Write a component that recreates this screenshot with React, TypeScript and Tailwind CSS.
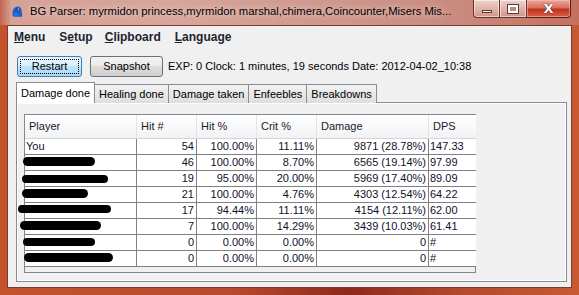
import React from 'react';

interface Row {
  name?: string;
  blob?: { left: number; top: number; w: number; h: number };
  hit: string;
  hitPct: string;
  crit: string;
  dmg: string;
  dps: string;
}

const rows: Row[] = [
  { name: 'You', hit: '54', hitPct: '100.00%', crit: '11.11%', dmg: '9871 (28.78%)', dps: '147.33' },
  { blob: { left: -2, top: 2, w: 72, h: 9 }, hit: '46', hitPct: '100.00%', crit: '8.70%', dmg: '6565 (19.14%)', dps: '97.99' },
  { blob: { left: -3, top: 4, w: 86, h: 8 }, hit: '19', hitPct: '95.00%', crit: '20.00%', dmg: '5969 (17.40%)', dps: '89.09' },
  { blob: { left: -3, top: 2, w: 66, h: 9 }, hit: '21', hitPct: '100.00%', crit: '4.76%', dmg: '4303 (12.54%)', dps: '64.22' },
  { blob: { left: -7, top: 2, w: 93, h: 8 }, hit: '17', hitPct: '94.44%', crit: '11.11%', dmg: '4154 (12.11%)', dps: '62.00' },
  { blob: { left: -5, top: 2, w: 81, h: 9 }, hit: '7', hitPct: '100.00%', crit: '14.29%', dmg: '3439 (10.03%)', dps: '61.41' },
  { blob: { left: -2, top: 3, w: 72, h: 8 }, hit: '0', hitPct: '0.00%', crit: '0.00%', dmg: '0', dps: '#' },
  { blob: { left: -1, top: 2, w: 89, h: 9 }, hit: '0', hitPct: '0.00%', crit: '0.00%', dmg: '0', dps: '#' },
];

const headers = ['Player', 'Hit #', 'Hit %', 'Crit %', 'Damage', 'DPS'];

const tabs = ['Healing done', 'Damage taken', 'Enfeebles', 'Breakdowns'];

function AppIcon() {
  return (
    <svg width="12" height="13" viewBox="0 0 14 14" className="shrink-0">
      <path
        d="M2 12 C1 8 2 4 5 2 C8 0.5 11 1.5 12 4 C13 6 12 8 13 10 L13 13 L3 13 Z"
        fill="#1f5fc4"
      />
      <path d="M5 5 C6 3.5 9 3.5 10 5 C9 6 7 6.5 5 5 Z" fill="#0d3a8a" />
      <circle cx="8.5" cy="4.5" r="0.9" fill="#9fd0ff" />
      <path d="M3 9 C5 8 8 9 9 11 L4 12 Z" fill="#2f78e0" />
    </svg>
  );
}

function TitleButtons() {
  return (
    <div className="flex self-start h-[18px]">
      <div className="w-[27px] h-full border border-[#6b2f26] border-t-0 rounded-bl-[4px] bg-gradient-to-b from-[#efd2cb] to-[#cf958a] shadow-[inset_0_0_0_1px_rgba(255,255,255,0.55)] flex items-end justify-center pb-[4px]">
        <div className="w-[10px] h-[3px] bg-white border border-[#5a3a36]" />
      </div>
      <div className="w-[27px] h-full border border-[#6b2f26] border-t-0 border-l-0 bg-gradient-to-b from-[#efd2cb] to-[#cf958a] shadow-[inset_0_0_0_1px_rgba(255,255,255,0.55)] flex items-center justify-center">
        <div className="w-[10px] h-[8px] border-[2px] border-white outline outline-1 outline-[#5a3a36] bg-[#b98a84]" />
      </div>
      <div className="w-[44px] h-full border border-[#5b1a12] border-t-0 border-l-0 rounded-br-[4px] bg-[linear-gradient(180deg,#e9a89a_0%,#d8705c_45%,#c0321c_55%,#d8604a_100%)] shadow-[inset_0_0_0_1px_rgba(255,200,190,0.5)] flex items-center justify-center">
        <span className="text-white font-bold text-[13px] leading-none font-['DejaVu_Sans',sans-serif] [text-shadow:0_0_1px_#3a1a16,0_0_1px_#3a1a16]">
          X
        </span>
      </div>
    </div>
  );
}

function TabStrip() {
  return (
    <div className="flex items-end ml-[8px] h-[21px]">
      <div className="h-[21px] w-[79px] bg-white border border-[#898c95] border-b-0 flex items-center justify-center text-[11px] text-black relative z-10">
        Damage done
      </div>
      {tabs.map((t) => (
        <div
          key={t}
          className="h-[19px] px-[4px] -ml-px first:ml-0 bg-gradient-to-b from-[#f2f2f2] to-[#dedede] border border-[#898c95] border-b-0 flex items-center text-[11px] text-black"
        >
          {t}
        </div>
      ))}
    </div>
  );
}

function StatsTable() {
  return (
    <div className="ml-[7px] mt-[10px] w-[452px] h-[159px] border border-[#828790] bg-[#f0f0f0]">
      <div className="grid grid-cols-[112px_60px_60px_60px_112px_47px]">
        {headers.map((h, i) => (
          <div
            key={h}
            className={`h-[24px] pl-[4px] flex items-center text-[11px] text-[#1a1a2e] bg-gradient-to-b from-white to-[#f1f2f4] border-b border-[#d5d5d5] ${
              i < 5 ? 'border-r border-r-[#e3e4e6]' : ''
            }`}
          >
            {h}
          </div>
        ))}
        {rows.map((r, ri) => (
          <React.Fragment key={ri}>
            <div className="h-[16px] bg-white border-r border-b border-[#808080] pl-[1px] text-[11px] leading-[15px] text-[#10102a] relative">
              {r.name}
              {r.blob && (
                <div
                  className="absolute bg-black rounded-full"
                  style={{ left: r.blob.left, top: r.blob.top, width: r.blob.w, height: r.blob.h }}
                />
              )}
            </div>
            <div className="h-[16px] bg-white border-r border-b border-[#808080] pr-[2px] text-right text-[11px] leading-[15px] text-[#10102a]">
              {r.hit}
            </div>
            <div className="h-[16px] bg-white border-r border-b border-[#808080] pr-[2px] text-right text-[11px] leading-[15px] text-[#10102a]">
              {r.hitPct}
            </div>
            <div className="h-[16px] bg-white border-r border-b border-[#808080] pr-[2px] text-right text-[11px] leading-[15px] text-[#10102a]">
              {r.crit}
            </div>
            <div className="h-[16px] bg-white border-r border-b border-[#808080] pr-[2px] text-right text-[11px] leading-[15px] text-[#10102a]">
              {r.dmg}
            </div>
            <div className="h-[16px] bg-white border-b border-[#808080] pl-[1px] text-[11px] leading-[15px] text-[#10102a]">
              {r.dps}
            </div>
          </React.Fragment>
        ))}
      </div>
    </div>
  );
}

export default function App() {
  return (
    <div className="w-[579px] h-[295px] overflow-hidden flex flex-col font-['Liberation_Sans',Arial,sans-serif] bg-[linear-gradient(90deg,#c4532c_0%,#b9492e_40%,#8e2a1c_60%,#b44a2e_80%,#c85a32_100%)]">
      {/* title bar */}
      <div className="h-[25px] shrink-0 flex pr-[8px] bg-[linear-gradient(90deg,#c0664c_0%,#d6a196_2%,#d7a59b_30%,#cf968b_60%,#c98a7e_80%,#c4705e_100%)]">
        <div className="flex items-center flex-1 min-w-0 pl-[11px] pb-[2px]">
          <AppIcon />
          <span className="ml-[7px] text-[11.25px] text-black whitespace-nowrap [text-shadow:0_0_6px_rgba(255,255,255,0.8)]">
            BG Parser: myrmidon princess,myrmidon marshal,chimera,Coincounter,Misers Mis...
          </span>
        </div>
        <TitleButtons />
      </div>

      {/* client area */}
      <div className="flex-1 mx-[7px] mb-[7px] border border-[#7a3b30] bg-[#f0f0f0] flex flex-col">
        {/* menu bar */}
        <div className="h-[22px] shrink-0 flex items-center text-[12px] font-bold text-[#1c2430]">
          <span className="ml-[6px]">
            <span className="underline">M</span>enu
          </span>
          <span className="ml-[14px]">
            S<span className="underline">e</span>tup
          </span>
          <span className="ml-[12px]">
            <span className="underline">C</span>lipboard
          </span>
          <span className="ml-[14px]">
            <span className="underline">L</span>anguage
          </span>
        </div>

        {/* toolbar */}
        <div className="mt-[8px] flex items-center h-[21px]">
          <button className="ml-[9px] w-[65px] h-[21px] rounded-[3px] border border-[#3c7fb1] bg-[linear-gradient(180deg,#eaf6fd_0%,#d9f0fc_45%,#bee6fd_50%,#a7d9f5_100%)] p-[2px] text-[11px] text-black">
            <div className="w-full h-full border border-dotted border-black flex items-center justify-center">
              Restart
            </div>
          </button>
          <button className="ml-[8px] w-[73px] h-[21px] rounded-[3px] border border-[#707070] bg-[linear-gradient(180deg,#f2f2f2_0%,#ebebeb_45%,#dddddd_50%,#cfcfcf_100%)] text-[11px] text-black flex items-center justify-center">
            Snapshot
          </button>
          <span className="ml-[5px] text-[11px] text-black">
            EXP: 0 Clock: 1 minutes, 19 seconds Date: 2012-04-02_10:38
          </span>
        </div>

        {/* tabs */}
        <div className="mt-[5px]">
          <TabStrip />
          <div className="ml-[8px] mr-[4px] -mt-px h-[180px] border border-[#898c95] bg-[#f0f0f0] shadow-[inset_0_0_0_1px_#ffffff] pt-px">
            <StatsTable />
          </div>
        </div>
      </div>
    </div>
  );
}
